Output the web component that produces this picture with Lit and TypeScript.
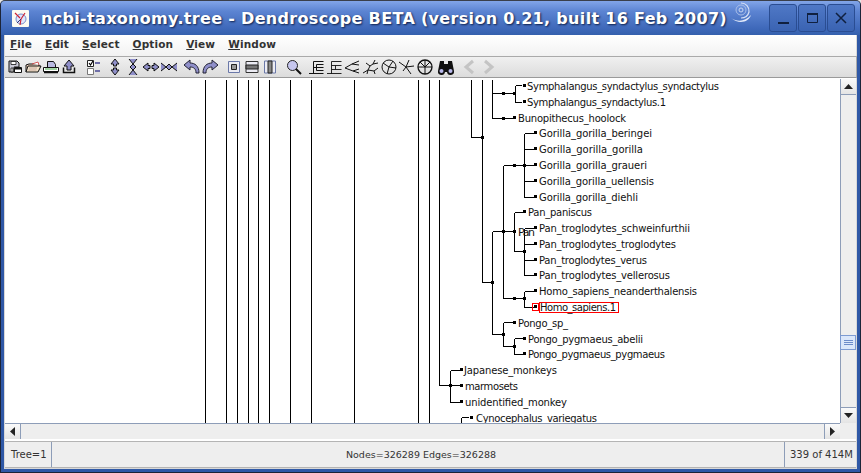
import { LitElement, html, css, svg } from "lit";
import { customElement } from "lit/decorators.js";

// [x1, y1, x2, y2]
const SEGMENTS: number[][] = [
  // long trunks running through the view
  ...[205, 226, 237, 248, 258, 269, 290, 311, 354, 418, 429].map((x) => [x, 79, x, 425]),
  [439, 79, 439, 385], [471, 79, 471, 137], [482, 79, 482, 282], [492, 79, 492, 118],
  [471, 137, 482, 137], [482, 282, 492, 282],
  // Symphalangus
  [492, 93, 514, 93], [515, 85, 515, 102], [515, 85, 521, 85], [515, 102, 521, 102],
  [492, 118, 514, 118],
  // Gorilla
  [492, 231, 492, 334], [492, 231, 503, 231], [503, 165, 503, 298], [503, 165, 524, 165],
  [524, 133, 524, 197],
  ...[133, 149, 165, 181, 197].map((y) => [524, y, 533, y]),
  // Pan
  [503, 231, 514, 231], [514, 212, 514, 251], [514, 212, 522, 212], [514, 251, 524, 251],
  [524, 228, 524, 275],
  ...[228, 244, 260, 275].map((y) => [524, y, 533, y]),
  // Homo
  [503, 298, 524, 298], [524, 291, 524, 307], [524, 291, 533, 291], [524, 307, 533, 307],
  // Pongo
  [492, 334, 503, 334], [503, 322, 503, 346], [503, 322, 512, 322], [503, 346, 514, 346],
  [514, 338, 514, 354], [514, 338, 522, 338], [514, 354, 522, 354],
  // monkeys
  [439, 385, 450, 385], [450, 370, 450, 402],
  ...[370, 385, 402].map((y) => [450, y, 460, y]),
  [461, 417, 461, 425], [461, 417, 468, 417],
];

// inner nodes, [x, y]
const NODES: number[][] = [
  [503, 93], [514, 93], [503, 118], [482, 137], [492, 282], [514, 165], [524, 165],
  [503, 231], [514, 231], [524, 251], [514, 298], [524, 298], [503, 334], [514, 346],
  [450, 385], [439, 424], [450, 424], [461, 424],
];

// [label, text x, y, end x, leaf square x]
const LEAVES: [string, number, number, number, number][] = [
  ["Symphalangus_syndactylus_syndactylus", 527, 86, 719, 524],
  ["Symphalangus_syndactylus.1", 527, 102, 666, 524],
  ["Bunopithecus_hoolock", 518, 118, 626, 514],
  ["Gorilla_gorilla_beringei", 539, 133, 652, 535],
  ["Gorilla_gorilla_gorilla", 539, 149, 643, 535],
  ["Gorilla_gorilla_graueri", 539, 165, 647, 535],
  ["Gorilla_gorilla_uellensis", 539, 181, 654, 535],
  ["Gorilla_gorilla_diehli", 539, 197, 638, 535],
  ["Pan_paniscus", 528, 212, 592, 524],
  ["Pan_troglodytes_schweinfurthii", 539, 228, 690, 535],
  ["Pan_troglodytes_troglodytes", 539, 244, 676, 535],
  ["Pan_troglodytes_verus", 539, 260, 647, 535],
  ["Pan_troglodytes_vellerosus", 539, 275, 670, 535],
  ["Homo_sapiens_neanderthalensis", 539, 291, 697, 535],
  ["Homo_sapiens.1", 540, 307, 616, 535],
  ["Pongo_sp_", 518, 323, 568, 514],
  ["Pongo_pygmaeus_abelii", 528, 339, 643, 524],
  ["Pongo_pygmaeus_pygmaeus", 528, 354, 665, 524],
  ["Japanese_monkeys", 464, 370, 557, 461],
  ["marmosets", 465, 386, 518, 461],
  ["unidentified_monkey", 465, 402, 567, 461],
  ["Cynocephalus_variegatus", 476, 418, 597, 471],
];

const P = "#8f8fc9";
const K = "#111";

const ICONS = [
  // file group
  { gap: 0, items: [
    svg`<path d="M3 3h8l2 2v4H8v5H3z" fill="#c9c9d6" stroke="${K}"/><path d="M5 3.500h5v3H5zM5 10h2v4H5z" fill="#fff" stroke="${K}" stroke-width=".8"/><path d="M8.500 9.500h7v5h-7z" fill="#fff" stroke="${K}"/><path d="M9 10h6v1.500H9z" fill="${K}"/>`,
    svg`<path d="M2 14V7l3-1h9l1 1v1" fill="#f6d8c0" stroke="${K}"/><path d="M2 14l2-6h13l-3 6z" fill="#f4e4c8" stroke="${K}"/><path d="M8 6l6-2 1 3" fill="#fff" stroke="#c33" stroke-width=".8"/><path d="M5 10h8M4.500 12h8" stroke="#b99" stroke-width=".8"/>`,
    svg`<path d="M5.500 3.500h6l2 3v3h-8z" fill="#b9b9e0" stroke="${K}"/><path d="M1.500 9.500h15v4h-15z" fill="#fff" stroke="${K}"/><path d="M3 11h12" stroke="#4a4"/><path d="M2 14.500h14" stroke="${K}" stroke-width="1.500"/>`,
    svg`<path d="M9 2l5 6h-3v4H7V8H4z" fill="${P}" stroke="${K}"/><path d="M3.500 9.500v5h11v-5" fill="none" stroke="${K}" stroke-width="1.500"/>`,
  ] },
  // checklist
  { gap: 6, items: [
    svg`<path d="M3.500 2.500h6v6h-6z" fill="#fff" stroke="#222"/><path d="M5 5l1.500 2L9 3" fill="none" stroke="#000" stroke-width="1.200"/><path d="M3.500 10.500h6v6h-6z" fill="#fff" stroke="#777"/><path d="M11 4h5v2h-5zM11 12h5v2h-5z" fill="#6f6fa8"/>`,
  ] },
  // expand and contract
  { gap: 4, items: [
    svg`<path d="M9 1l4 5h-2.500v2h-3V6H5zM9 17l4-5h-2.500v-2h-3v2H5z" fill="${P}" stroke="${K}" stroke-linejoin="round"/>`,
    svg`<path d="M5 1l4 5 4-5M5 17l4-5 4 5" fill="${P}" stroke="${K}"/><path d="M9 6l-3 3 3 3 3-3z" fill="${P}" stroke="${K}"/>`,
    svg`<path d="M1 9l5-4v2.500h2v3H6V13zM17 9l-5-4v2.500h-2v3h2V13z" fill="${P}" stroke="${K}" stroke-linejoin="round"/>`,
    svg`<path d="M1 5l5 4-5 4M17 5l-5 4 5 4" fill="${P}" stroke="${K}"/><path d="M6 9l3-3 3 3-3 3z" fill="${P}" stroke="${K}"/>`,
  ] },
  // undo and redo
  { gap: 5, items: [
    svg`<path d="M1 7l6-5v3c5 0 9 3 9 10h-3c0-4-2-6-6-6v3z" fill="${P}" stroke="#223" stroke-linejoin="round"/>`,
    svg`<path d="M17 7l-6-5v3C6 5 2 8 2 15h3c0-4 2-6 6-6v3z" fill="${P}" stroke="#223" stroke-linejoin="round"/>`,
  ] },
  // zoom to fit
  { gap: 6, items: [
    svg`<path d="M3.500 3.500h11v11h-11z" fill="#ececf4" stroke="#6a78a8"/><path d="M6.500 6.500h5v5h-5z" fill="#999" stroke="#222"/>`,
    svg`<path d="M3 3.500h12v11H3z" fill="#ececf4" stroke="#333"/><path d="M3 7h12v4H3z" fill="#777" stroke="#222"/>`,
    svg`<path d="M3.500 3h11v12h-11z" fill="#ececf4" stroke="#6a78a8"/><path d="M7 3h4v12H7z" fill="#888" stroke="#222"/>`,
  ] },
  { gap: 6, items: [
    svg`<circle cx="7.500" cy="7.500" r="5" fill="#c6c6ee" stroke="#222"/><path d="M11 11l5 5" stroke="${K}" stroke-width="2"/>`,
  ] },
  // tree drawings
  { gap: 5, items: [
    svg`<path d="M1 15.500h5M5.500 3.500v12M5.500 9.500h3M8.500 6.500v6M5.500 3.500h10M8.500 6.500h7M8.500 9.500h7M8.500 12.500h7M5.500 15.500h10" fill="none" stroke="${K}"/>`,
    svg`<path d="M1 15.500h5M5.500 3.500v12M5.500 3.500h10M5.500 7.500h10M5.500 11.500h10M5.500 15.500h10M9.500 7.500v4" fill="none" stroke="${K}" stroke-width=".9"/>`,
    svg`<path d="M1 10l7-4 7-3M8 6l7 1M1 10l8 3 6-2M9 13l6 2" fill="none" stroke="${K}"/>`,
    svg`<path d="M1 15l5-3 2-4 3-2 2-4M11 6l5-1M8 8l-4-3M6 12l-1 4M6 12l6 1 1 3M12 13l4-3" fill="none" stroke="${K}"/>`,
    svg`<circle cx="9" cy="9" r="7" fill="none" stroke="${K}"/><path d="M3 5l6 4 4-6M9 9l-2 7M9 9l7 1" fill="none" stroke="${K}"/>`,
    svg`<path d="M1 4l7 5 8-1M8 9l5 7M11 2l-3 7M8 9l-3 4" fill="none" stroke="${K}"/>`,
    svg`<circle cx="9" cy="9" r="7" fill="none" stroke="${K}" stroke-width="1.300"/><path d="M9 2v14M2 9h14M4 4l5 5 5-5" fill="none" stroke="${K}"/>`,
  ] },
  { gap: 3, items: [
    svg`<path d="M3 3h4v3h4V3h4l2 10a3.500 3.500 0 0 1-7 1H8a3.500 3.500 0 0 1-7-1z" fill="#111"/><circle cx="4.500" cy="13" r="2" fill="#b9b9ec"/><circle cx="13.500" cy="13" r="2" fill="#b9b9ec"/>`,
  ] },
  { gap: 6, items: [
    svg`<path d="M12 3L5 9l7 6" fill="none" stroke="#c4c4c4" stroke-width="3"/>`,
    svg`<path d="M6 3l7 6-7 6" fill="none" stroke="#c4c4c4" stroke-width="3"/>`,
  ] },
];

const MENUS = ["File", "Edit", "Select", "Option", "View", "Window"];

@customElement("app-root")
export class AppRoot extends LitElement {
  static styles = css`
    :host {
      display: block;
      width: 861px;
      height: 473px;
      font-family: "DejaVu Sans", sans-serif;
      background: #e8e8e8;
    }

    .window {
      box-sizing: border-box;
      height: 473px;
      display: flex;
      flex-direction: column;
      background: #2f58a6;
      border: 1px solid #1c2438;
      border-top-color: #3a3f4a;
      border-radius: 5px 5px 0 0;
    }

    .titlebar {
      flex: none;
      height: 34px;
      display: flex;
      align-items: center;
      background: linear-gradient(#82a5e8, #5c84d2 30%, #3f69ba 80%, #3560ad);
      border-radius: 4px 4px 0 0;
    }

    .app-icon {
      margin-left: 11px;
      flex: none;
    }

    .title {
      margin-left: 12px;
      width: 688px;
      font-size: 16px;
      letter-spacing: 0.32px;
      font-weight: bold;
      color: #fff;
      white-space: nowrap;
      text-shadow: 1px 1px 2px #0d1f4a;
    }

    .swirl {
      margin-left: 2px;
      margin-bottom: 8px;
      flex: none;
    }

    .win-buttons {
      margin-left: auto;
      margin-right: 5px;
      display: flex;
      gap: 1px;
    }

    .win-btn {
      width: 28px;
      height: 28px;
      border: 1px solid #2a4d92;
      border-radius: 3px;
      background: linear-gradient(#4f78c6, #3a63b2);
      box-sizing: border-box;
      display: flex;
      align-items: center;
      justify-content: center;
    }

    .content {
      flex: 1;
      margin: 0 3px 3px;
      min-height: 0;
      display: flex;
      flex-direction: column;
      background: #fff;
      border: 1px solid #d8d8d8;
      border-top: none;
    }

    .menubar {
      flex: none;
      box-sizing: border-box;
      height: 21px;
      display: flex;
      align-items: center;
      gap: 13px;
      padding: 0 0 3px 5px;
      background: linear-gradient(#fff, #f2f2f2);
      font-size: 10.500px;
      font-weight: bold;
      color: #333;
      letter-spacing: 0.15px;
    }

    .menubar u {
      text-underline-offset: 1px;
    }

    .toolbar {
      flex: none;
      box-sizing: border-box;
      height: 22px;
      display: flex;
      align-items: center;
      padding-left: 1px;
      margin-right: -1px;
      background: linear-gradient(#f0f0f0, #dcdcdc);
      border-top: 1px solid #aaa;
      border-right: 1px solid #aaa;
      border-bottom: 1px solid #9a9a9a;
    }

    .tool-group {
      display: flex;
    }

    .tool {
      width: 18px;
      height: 18px;
      display: block;
    }

    .main {
      flex: 1;
      min-height: 0;
      display: grid;
      grid-template-columns: 1fr 16px;
      grid-template-rows: 1fr 16px;
      margin-top: 1px;
    }

    .canvas {
      min-width: 0;
      min-height: 0;
      overflow: hidden;
      background: #fff;
    }

    .canvas svg {
      display: block;
    }

    .canvas text {
      font-family: "DejaVu Sans", sans-serif;
      font-size: 10px;
      fill: #111;
    }

    .canvas .tag {
      font-size: 11px;
    }

    .vscroll {
      display: flex;
      flex-direction: column;
      background: #eee;
      border-left: 1px solid #8d9db8;
    }

    .hscroll {
      display: flex;
      background: #eee;
      border-top: 1px solid #8d9db8;
    }

    .corner {
      background: #eee;
    }

    .arrow {
      flex: none;
      box-sizing: border-box;
      display: flex;
      align-items: center;
      justify-content: center;
      background: linear-gradient(#fafafa, #e4e4e4);
    }

    .vscroll .arrow {
      height: 16px;
      border-bottom: 1px solid #8d9db8;
    }

    .vscroll .arrow.down {
      border-bottom: none;
      border-top: 1px solid #8d9db8;
    }

    .hscroll .arrow {
      width: 16px;
      border-right: 1px solid #8d9db8;
    }

    .hscroll .arrow.right {
      border-right: none;
      border-left: 1px solid #8d9db8;
    }

    .track {
      flex: 1;
      position: relative;
    }

    .thumb {
      position: absolute;
      left: -1px;
      right: 0;
      top: 240px;
      height: 15px;
      box-sizing: border-box;
      background: #dbe7fa;
      border: 1px solid #7d9bd2;
      display: flex;
      flex-direction: column;
      align-items: center;
      justify-content: center;
      gap: 1px;
    }

    .thumb i {
      width: 9px;
      height: 1px;
      background: #6c8cca;
    }

    .statusbar {
      flex: none;
      box-sizing: border-box;
      height: 27px;
      display: flex;
      margin-top: 2px;
      background: #eee;
      border-top: 1px solid #b4b4b4;
      border-bottom: 1px solid #b4b4b4;
      font-size: 10px;
      color: #333;
    }

    .cell {
      display: flex;
      align-items: center;
    }

    .cell.tree {
      width: 47px;
      padding-left: 6px;
      box-sizing: border-box;
      border-right: 1px solid #8d9db8;
    }

    .cell.stats {
      flex: 1;
      justify-content: center;
      font-size: 9.500px;
      padding-left: 6px;
    }

    .cell.mem {
      width: 72px;
      box-sizing: border-box;
      padding-left: 5px;
      border-left: 1px solid #8d9db8;
      white-space: nowrap;
    }
  `;

  private renderTree() {
    return html`<svg width="835" height="346" viewBox="5 79 835 346">
      <g stroke="#000" shape-rendering="crispEdges">
        ${SEGMENTS.map(
          ([x1, y1, x2, y2]) =>
            svg`<line x1=${x1 + 0.5} y1=${y1 + 0.5} x2=${x2 + 0.5} y2=${y2 + 0.5} />`
        )}
      </g>
      ${NODES.map(([x, y]) => svg`<rect x=${x - 1} y=${y - 1} width="3" height="3" />`)}
      ${LEAVES.map(
        ([label, x, y, end, square]) => svg`
          <rect x=${square - 1} y=${y - 2} width="3" height="3" />
          <text x=${x} y=${y + 4} textLength=${end - x} lengthAdjust="spacing">${label}</text>
        `
      )}
      <text class="tag" x="518" y="236" textLength="17" lengthAdjust="spacing">Pan</text>
      <rect x="532.500" y="303.500" width="6" height="7" fill="none" stroke="#f00" />
      <rect x="539.500" y="302.500" width="79" height="10" fill="none" stroke="#f00" />
    </svg>`;
  }

  render() {
    return html`
      <div class="window">
        <div class="titlebar">
          <svg class="app-icon" width="17" height="17" viewBox="0 0 17 17">
            <rect width="17" height="17" rx="1" fill="#fdfbf2" />
            <circle cx="9" cy="9" r="5" fill="#dfe6fb" stroke="#7a8ccc" />
            <path d="M3 3l5 5M13 3l-4 6M9 9l-1 6" stroke="#c23" stroke-width="1.200" />
            <path d="M5 13l4-4" stroke="#337" />
          </svg>
          <div class="title">ncbi-taxonomy.tree - Dendroscope BETA (version 0.21, built 16 Feb 2007)</div>
          <svg class="swirl" width="22" height="24" viewBox="0 0 22 24" fill="none">
            <circle cx="10" cy="8" r="2" stroke="#c8d6f2" />
            <circle cx="10" cy="8" r="5" stroke="#a9bee8" />
            <path d="M10 1a8 8 0 0 1 8 9c-1 4-4 6-8 6" stroke="#d6e0f6" stroke-width="1.200" />
            <path d="M0 16c6 4 14 4 20-3-2 7-12 10-20 3z" fill="#e4ebfa" />
          </svg>
          <div class="win-buttons">
            <div class="win-btn">
              <svg width="15" height="15"><rect x="2" y="11" width="11" height="2" fill="#10203f" /></svg>
            </div>
            <div class="win-btn">
              <svg width="15" height="15">
                <path d="M2.500 2.500h10v9h-10z" fill="none" stroke="#10203f" />
                <rect x="2" y="2" width="11" height="2" fill="#10203f" />
              </svg>
            </div>
            <div class="win-btn">
              <svg width="15" height="15"><path d="M2 2l10 10M12 2L2 12" stroke="#10203f" stroke-width="1.500" /></svg>
            </div>
          </div>
        </div>
        <div class="content">
          <div class="menubar">
            ${MENUS.map((m) => html`<span><u>${m[0]}</u>${m.slice(1)}</span>`)}
          </div>
          <div class="toolbar">
            ${ICONS.map(
              (group) => html`<div class="tool-group" style="margin-left:${group.gap}px">
                ${group.items.map(
                  (icon) => html`<svg class="tool" viewBox="0 0 18 18">${icon}</svg>`
                )}
              </div>`
            )}
          </div>
          <div class="main">
            <div class="canvas">${this.renderTree()}</div>
            <div class="vscroll">
              <div class="arrow">
                <svg width="9" height="5"><path d="M0 5h9L4.500 0z" fill="#222" /></svg>
              </div>
              <div class="track">
                <div class="thumb"><i></i><i></i><i></i></div>
              </div>
              <div class="arrow down">
                <svg width="9" height="5"><path d="M0 0h9L4.500 5z" fill="#222" /></svg>
              </div>
            </div>
            <div class="hscroll">
              <div class="arrow">
                <svg width="5" height="9"><path d="M5 0v9L0 4.500z" fill="#222" /></svg>
              </div>
              <div class="track"></div>
              <div class="arrow right">
                <svg width="5" height="9"><path d="M0 0v9l5-4.500z" fill="#222" /></svg>
              </div>
            </div>
            <div class="corner"></div>
          </div>
          <div class="statusbar">
            <div class="cell tree">Tree=1</div>
            <div class="cell stats">Nodes=326289 Edges=326288</div>
            <div class="cell mem">339 of 414M</div>
          </div>
        </div>
      </div>
    `;
  }
}
